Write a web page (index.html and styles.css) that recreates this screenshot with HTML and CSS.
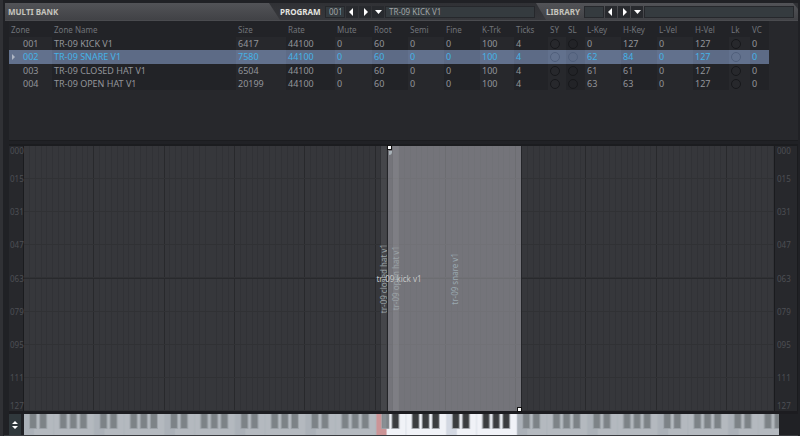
FILE: index.html
```html
<!DOCTYPE html>
<html lang="en">
<head>
    <meta charset="UTF-8">
    <meta name="viewport" content="width=device-width, initial-scale=1.0">
    <title>Multi Bank</title>
    <link rel="stylesheet" href="styles.css">
</head>
<body>
    <div class="header">
        <h1 class="tab tab-bank">MULTI BANK</h1>
        <div class="group group-program">
            <label for="program-number">PROGRAM</label>
            <input class="number" type="text" id="program-number" value="001">
            <button type="button" aria-label="Previous program"><svg viewBox="0 0 12 12"><path d="M7 2v8L3 6z"/></svg></button>
            <button type="button" aria-label="Next program"><svg viewBox="0 0 12 12"><path d="M5 2v8l4-4z"/></svg></button>
            <button type="button" aria-label="Program menu"><svg viewBox="0 0 12 12"><path d="M3 4h7L6.500 8z"/></svg></button>
            <input class="name" type="text" aria-label="Program name" value="TR-09 KICK V1">
        </div>
        <div class="group group-library">
            <label for="library-number">LIBRARY</label>
            <input class="number" type="text" id="library-number">
            <button type="button" aria-label="Previous library"><svg viewBox="0 0 12 12"><path d="M7 2v8L3 6z"/></svg></button>
            <button type="button" aria-label="Next library"><svg viewBox="0 0 12 12"><path d="M5 2v8l4-4z"/></svg></button>
            <button type="button" aria-label="Library menu"><svg viewBox="0 0 12 12"><path d="M3 4h7L6.500 8z"/></svg></button>
            <input class="name" type="text" aria-label="Library name">
        </div>
    </div>

    <div class="zone-list">
        <table>
            <colgroup>
                <col class="col-zone"><col class="col-name"><col class="col-size"><col class="col-rate">
                <col class="col-mute"><col class="col-num"><col class="col-num"><col class="col-num">
                <col class="col-trk"><col class="col-trk"><col class="col-led"><col class="col-led-last">
                <col class="col-num"><col class="col-num"><col class="col-num"><col class="col-num">
                <col class="col-lock"><col class="col-vc">
            </colgroup>
            <thead>
                <tr>
                    <th>Zone</th><th>Zone Name</th><th>Size</th><th>Rate</th><th>Mute</th><th>Root</th>
                    <th>Semi</th><th>Fine</th><th>K-Trk</th><th>Ticks</th><th>SY</th><th>SL</th>
                    <th>L-Key</th><th>H-Key</th><th>L-Vel</th><th>H-Vel</th><th>Lk</th><th>VC</th>
                </tr>
            </thead>
            <tbody>
                <tr>
                    <td>001</td><td>TR-09 KICK V1</td><td>6417</td><td>44100</td><td>0</td><td>60</td>
                    <td>0</td><td>0</td><td>100</td><td>4</td>
                    <td><input type="checkbox" aria-label="SY"></td><td><input type="checkbox" aria-label="SL"></td>
                    <td>0</td><td>127</td><td>0</td><td>127</td>
                    <td><input type="checkbox" aria-label="Lk"></td><td>0</td>
                </tr>
                <tr class="selected">
                    <td>002</td><td>TR-09 SNARE V1</td><td>7580</td><td>44100</td><td>0</td><td>60</td>
                    <td>0</td><td>0</td><td>100</td><td>4</td>
                    <td><input type="checkbox" aria-label="SY"></td><td><input type="checkbox" aria-label="SL"></td>
                    <td>62</td><td>84</td><td>0</td><td>127</td>
                    <td><input type="checkbox" aria-label="Lk"></td><td>0</td>
                </tr>
                <tr>
                    <td>003</td><td>TR-09 CLOSED HAT V1</td><td>6504</td><td>44100</td><td>0</td><td>60</td>
                    <td>0</td><td>0</td><td>100</td><td>4</td>
                    <td><input type="checkbox" aria-label="SY"></td><td><input type="checkbox" aria-label="SL"></td>
                    <td>61</td><td>61</td><td>0</td><td>127</td>
                    <td><input type="checkbox" aria-label="Lk"></td><td>0</td>
                </tr>
                <tr>
                    <td>004</td><td>TR-09 OPEN HAT V1</td><td>20199</td><td>44100</td><td>0</td><td>60</td>
                    <td>0</td><td>0</td><td>100</td><td>4</td>
                    <td><input type="checkbox" aria-label="SY"></td><td><input type="checkbox" aria-label="SL"></td>
                    <td>63</td><td>63</td><td>0</td><td>127</td>
                    <td><input type="checkbox" aria-label="Lk"></td><td>0</td>
                </tr>
            </tbody>
        </table>
    </div>

    <div class="key-map">
        <div class="axis">
            <span>000</span><span>015</span><span>031</span><span>047</span><span>063</span><span>079</span><span>095</span><span>111</span><span>127</span>
        </div>
        <!-- zones: left and width are key / 128 -->
        <div class="grid">
            <div class="zone" style="left: 47.65625%; width: 0.78125%"><span>tr-09 closed hat v1</span></div>
            <div class="zone zone-active" style="left: 48.4375%; width: 17.96875%">
                <span>tr-09 snare v1</span>
                <i class="handle handle-top"></i>
                <i class="flag"></i>
                <i class="handle handle-bottom"></i>
            </div>
            <div class="zone" style="left: 49.21875%; width: 0.78125%"><span>tr-09 open hat v1</span></div>
            <div class="zone zone-full"><span>tr-09 kick v1</span></div>
        </div>
        <div class="axis axis-right">
            <span>000</span><span>015</span><span>031</span><span>047</span><span>063</span><span>079</span><span>095</span><span>111</span><span>127</span>
        </div>
    </div>

    <div class="keyboard">
        <button type="button" class="scroll" aria-label="Move keyboard"><svg viewBox="0 0 12 20"><path d="M6 6l3 3H3zM6 14l3-3H3z"/></svg></button>
        <!-- 75 white keys, one octave is 70 units wide -->
        <svg class="keys" viewBox="0 0 750 21" preserveAspectRatio="none">
            <defs>
                <pattern id="white" width="70" height="21" patternUnits="userSpaceOnUse">
                    <rect class="key-white" width="70" height="21"/>
                    <rect class="key-c" width="10" height="21"/>
                    <path class="key-line" d="M29.5 0v21M69.5 0v21"/>
                </pattern>
                <pattern id="black" width="70" height="21" patternUnits="userSpaceOnUse">
                    <path class="key-shade" d="M5 0h8v15H5zM15 0h8v15h-8zM35 0h8v15h-8zM45 0h8v15h-8zM55 0h8v15h-8z"/>
                    <path class="key-black" d="M6 0h6v14H6zM16 0h6v14h-6zM36 0h6v14h-6zM46 0h6v14h-6zM56 0h6v14h-6z"/>
                </pattern>
            </defs>
            <rect width="750" height="21" fill="url(#white)"/>
            <rect class="key-root" x="350" width="10" height="21"/>
            <rect width="750" height="21" fill="url(#black)"/>
            <rect class="key-off" width="350" height="21"/>
            <rect class="key-off key-off-root" x="350" width="10" height="21"/>
            <rect class="key-off" x="356" width="6" height="15"/>
            <rect class="key-off" x="490" width="260" height="21"/>
        </svg>
    </div>
</body>
</html>
```

FILE: styles.css
```css
* {
    box-sizing: border-box;
}
body {
    font-family: "Noto Sans", "Open Sans", sans-serif;
    font-size: 9px;
    margin: 0;
    height: 100vh;
    padding: 3px 2px 0 1px;
    display: flex;
    flex-direction: column;
    background-color: #202125;
    border-left: 3px solid #303135;
    color: #92959a;
}
button {
    padding: 0;
    border: none;
    color: #fff;
    background-color: #282a2e;
}
button svg {
    display: block;
    fill: currentColor;
}

/* header tabs */
.header {
    display: flex;
    height: 18px;
    margin-left: 1px;
    font-size: 8px;
    background: linear-gradient(#303135, #37383c);
    border-bottom: 1px solid #4a4b4f;
}
.header label,
.tab {
    font-size: 8px;
    font-weight: bold;
    color: #c5c4bd;
}
.tab {
    width: 275px;
    margin: 0;
    padding-left: 3px;
    line-height: 18px;
    background: linear-gradient(#525357, #414246);
    clip-path: polygon(0 0, 264px 0, 100% 100%, 0 100%);
}
.group {
    display: flex;
    align-items: center;
    gap: 1px;
}
.group-program {
    width: 256px;
    padding-right: 1px;
}
.group-program label {
    width: 44px;
    color: #e5e5e0;
}
.group-library {
    flex: 1;
    padding: 0 4px 0 10px;
    background: linear-gradient(#525357, #414246);
    clip-path: polygon(0 0, calc(100% - 5px) 0, 100% 6px, 100% 100%, 10px 100%);
}
.group-library label {
    width: 37px;
}
.header input {
    font: inherit;
    height: 12px;
    min-width: 0;
    padding: 0 3px;
    color: #a0a4a6;
    background-color: #353b3f;
    border: 1px solid #26282c;
}
.header .number {
    width: 20px;
}
.header .name {
    flex: 1;
}
.header button {
    width: 12px;
    height: 12px;
}

/* zone table */
.zone-list {
    flex: none;
    height: 120px;
    margin-left: 5px;
    background-color: #27282c;
    border-bottom: 1px solid #1b1c1f;
}
table {
    table-layout: fixed;
    width: 760px;
    border-collapse: collapse;
}
th {
    height: 16px;
    padding: 2px 0 0 2px;
    font-size: 8px;
    line-height: 14px;
    font-weight: normal;
    text-align: left;
    white-space: nowrap;
    color: #71747a;
    background-color: #222327;
}
td {
    height: 13px;
    padding: 0 0 0 2px;
    line-height: 13px;
    white-space: nowrap;
}
td:first-child {
    padding-left: 14px;
}
td:nth-child(even) {
    background-color: #222327;
}
td input {
    appearance: none;
    display: block;
    width: 10px;
    height: 10px;
    margin: 0;
    border: 1px solid #17181b;
    border-radius: 50%;
}
.selected td {
    height: 14px;
    line-height: 14px;
    color: #45b3e6;
    background-color: #62718d;
}
.selected td:nth-child(even) {
    background-color: #5d6b86;
}
.selected td:first-child {
    padding-left: 3px;
}
.selected td:first-child::before {
    content: '';
    display: inline-block;
    width: 0;
    margin-right: 8px;
    border-left: 3px solid #aeb6c4;
    border-top: 3px solid transparent;
    border-bottom: 3px solid transparent;
}
.selected input {
    border-color: #505f7b;
}
.col-zone { width: 43px; }
.col-name { width: 184px; }
.col-size { width: 50px; }
.col-rate { width: 49px; }
.col-mute { width: 37px; }
.col-num { width: 36px; }
.col-trk { width: 34px; }
.col-led { width: 18px; }
.col-led-last { width: 19px; }
.col-lock { width: 21px; }
.col-vc { width: 19px; }

/* key / velocity map */
.key-map {
    flex: 1;
    display: flex;
    margin: 3px 0 0 5px;
    border-top: 2px solid #1b1c1f;
    border-bottom: 3px solid #1c1c20;
}
.axis {
    display: grid;
    grid-template-rows: 1fr repeat(7, 2fr) 1fr;
    align-items: center;
    width: 15px;
    padding-left: 1px;
    font-size: 8px;
    line-height: 10px;
    color: #4d4f54;
    background-color: #27282c;
    border-right: 1px solid #1a1b1e;
}
.axis span:first-child {
    align-self: start;
}
.axis span:last-child {
    align-self: end;
}
.axis-right {
    width: 24px;
    padding-left: 2px;
    border-left: 1px solid #1a1b1e;
}
.grid {
    flex: 1;
    position: relative;
    background:
        linear-gradient(transparent 50%, #28292c 50%, #28292c calc(50% + 1px), transparent calc(50% + 1px)),
        repeating-linear-gradient(transparent 0, transparent calc(12.5% - 1px), #303134 calc(12.5% - 1px), #303134 12.5%),
        repeating-linear-gradient(to right, transparent 0, transparent calc(9.375% - 1px), #28292c calc(9.375% - 1px), #28292c 9.375%),
        repeating-linear-gradient(to right, #36373b 0, #36373b calc(0.78125% - 1px), #313236 calc(0.78125% - 1px), #313236 0.78125%);
}
.zone {
    position: absolute;
    top: 0;
    bottom: 0;
    display: flex;
    align-items: center;
    justify-content: center;
    font-size: 8px;
    line-height: 10px;
    white-space: nowrap;
    color: #9ba2a6;
    background-color: rgba(255, 255, 255, 0.08);
}
.zone span {
    flex: none;
    writing-mode: vertical-rl;
    transform: rotate(180deg);
}
.zone-active {
    color: #9aa8b0;
    background-color: rgba(190, 190, 196, 0.46);
    border: solid #242529;
    border-width: 0 1px;
}
.zone-full {
    left: 0;
    right: 0;
    color: #c4c6c6;
    background: none;
}
.zone-full span {
    writing-mode: horizontal-tb;
    transform: none;
}
.handle {
    position: absolute;
    width: 5px;
    height: 5px;
    background-color: #fff;
    border: 1px solid #111;
}
.handle-top {
    top: -1px;
    left: -1px;
}
.handle-bottom {
    right: -1px;
    bottom: -1px;
}
.flag {
    position: absolute;
    top: 5px;
    left: 1px;
    width: 3px;
    height: 4px;
    background-color: #a8b2b8;
    border-bottom-right-radius: 3px;
}

/* piano keys */
.keyboard {
    flex: none;
    display: flex;
    gap: 3px;
    height: 22px;
    padding: 0 19px 0 5px;
    border-bottom: 1px solid #3a3c40;
}
.scroll {
    width: 12px;
    background-color: #30383c;
}
.keys {
    flex: 1;
    min-width: 0;
    height: 21px;
}
.key-white {
    fill: #f0f2f7;
}
.key-c {
    fill: #d3d8e2;
}
.key-line {
    stroke: #dde1e8;
}
.key-root {
    fill: #ec8d8d;
}
.key-black {
    fill: #3b3d3f;
}
.key-shade {
    fill: #a4a8ad;
}
.key-off {
    fill: #9aa1a6;
    opacity: 0.7;
}
.key-off-root {
    opacity: 0.4;
}
```
